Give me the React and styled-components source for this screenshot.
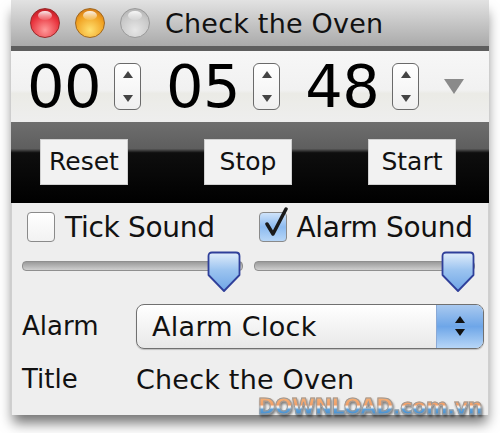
import React from "react";
import styled, { createGlobalStyle } from "styled-components";

const GlobalStyle = createGlobalStyle`
  html, body {
    margin: 0;
    padding: 0;
    background: #fff;
  }
  body {
    font-family: "DejaVu Sans", "Liberation Sans", sans-serif;
  }
`;

const Page = styled.div`
  position: relative;
  width: 500px;
  height: 433px;
  overflow: hidden;
  padding-left: 11px;
  box-sizing: border-box;
`;

const Window = styled.div`
  width: 478px;
  display: flex;
  flex-direction: column;
  box-shadow: 0 10px 12px -2px rgba(0, 0, 0, 0.55);
`;

const TitleBar = styled.div`
  height: 46px;
  display: flex;
  align-items: center;
  gap: 15px;
  padding-left: 19px;
  background: linear-gradient(#e2e2e2, #c6c6c6 50%, #aaaaaa);
  border-bottom: 5px solid #5e5e5e;
`;

const Light = styled.div`
  width: 30px;
  height: 30px;
  border-radius: 50%;
  box-sizing: border-box;
  border: 1px solid ${(p) => p.$edge};
  background: radial-gradient(circle at 50% 75%, ${(p) => p.$glow} 0%, ${(p) => p.$base} 60%, ${(p) => p.$dark} 100%);
  position: relative;
  &::after {
    content: "";
    position: absolute;
    left: 7px;
    top: 2px;
    width: 14px;
    height: 9px;
    border-radius: 50%;
    background: linear-gradient(rgba(255, 255, 255, 0.9), rgba(255, 255, 255, 0.1));
  }
`;

const WindowTitle = styled.div`
  font-size: 27px;
  color: #111;
  letter-spacing: 0.2px;
`;

const TimerRow = styled.div`
  height: 71px;
  display: flex;
  align-items: center;
  padding-left: 16px;
  background: linear-gradient(#f7f7f7, #f1f1f1 55%, #ebebe6 60%, #eeeeee);
`;

const Field = styled.div`
  display: flex;
  align-items: center;
  gap: 13px;
  margin-right: 25px;
`;

const Digits = styled.div`
  font-size: 59px;
  line-height: 1;
  color: #000;
  letter-spacing: -0.5px;
`;

const Stepper = styled.div`
  width: 27px;
  height: 47px;
  box-sizing: border-box;
  border: 1.5px solid #6a6a6a;
  border-radius: 6px;
  background: linear-gradient(#ffffff, #f0f0f0);
  display: flex;
  flex-direction: column;
  align-items: center;
  justify-content: space-between;
  padding: 7px 0;
`;

const Tri = styled.div`
  width: 0;
  height: 0;
  border-left: 5px solid transparent;
  border-right: 5px solid transparent;
  ${(p) =>
    p.$up
      ? "border-bottom: 7px solid #444;"
      : "border-top: 7px solid #444;"}
`;

const Disclosure = styled.div`
  width: 0;
  height: 0;
  border-left: 10px solid transparent;
  border-right: 10px solid transparent;
  border-top: 15px solid #8a8a8a;
  margin-left: 0;
`;

const ButtonBand = styled.div`
  height: 79px;
  display: flex;
  align-items: center;
  justify-content: space-between;
  padding: 0 33px 2px 29px;
  background: linear-gradient(#6e6e6e 0%, #5e5e5e 33%, #0e0e0e 38%, #000 100%);
`;

const BandButton = styled.div`
  width: 88px;
  height: 46px;
  box-sizing: border-box;
  background: #f2f2f2;
  border: 1px solid #d0d0d0;
  display: flex;
  align-items: center;
  justify-content: center;
  font-size: 25px;
  color: #111;
`;

const Content = styled.div`
  background: #eeeeee;
  border-left: 1px solid #cfcfcf;
  border-right: 1px solid #cfcfcf;
  height: 212px;
  display: flex;
  flex-direction: column;
  padding: 7px 0 0 0;
  box-sizing: border-box;
`;

const CheckRow = styled.div`
  display: flex;
  align-items: center;
  height: 34px;
  padding-left: 15px;
`;

const CheckItem = styled.label`
  display: flex;
  align-items: center;
  gap: 10px;
  font-size: 28px;
  color: #111;
  letter-spacing: -0.3px;
  width: ${(p) => p.$w}px;
`;

const Box = styled.div`
  position: relative;
  width: 28px;
  height: 30px;
  box-sizing: border-box;
  border: 1.5px solid #8a8a8a;
  border-radius: 4px;
  background: ${(p) =>
    p.$checked
      ? "linear-gradient(#cfe3fa, #8dbbf0 50%, #b7d6f7)"
      : "linear-gradient(#ffffff, #f2f2f2)"};
  svg {
    position: absolute;
    left: 1px;
    top: -6px;
  }
`;

const SliderRow = styled.div`
  display: flex;
  gap: 11px;
  padding-left: 10px;
  margin-top: 7px;
  height: 42px;
`;

const Slider = styled.div`
  position: relative;
  width: 221px;
  height: 42px;
`;

const Track = styled.div`
  position: absolute;
  left: 0;
  right: 0;
  top: 10px;
  height: 8px;
  border-radius: 4px;
  border: 1px solid #8f8f8f;
  background: linear-gradient(#9a9a9a, #cfcfcf);
`;

const Thumb = styled.svg`
  position: absolute;
  top: 0;
`;

const FormRow = styled.div`
  display: flex;
  align-items: center;
  padding-left: 10px;
  height: ${(p) => p.$h}px;
`;

const Label = styled.div`
  width: 114px;
  font-size: 26px;
  color: #111;
`;

const Value = styled.div`
  font-size: 27px;
  color: #111;
  letter-spacing: 0.2px;
`;

const Popup = styled.div`
  width: 348px;
  height: 45px;
  box-sizing: border-box;
  border: 1.5px solid #707070;
  border-radius: 8px;
  display: flex;
  overflow: hidden;
  background: linear-gradient(#ffffff, #f4f4f4 50%, #e8e8e8);
  box-shadow: 0 1px 1px rgba(0, 0, 0, 0.2);
`;

const PopupText = styled.div`
  flex: 1;
  display: flex;
  align-items: center;
  padding-left: 15px;
  font-size: 27px;
  color: #111;
  letter-spacing: 0.3px;
`;

const PopupArrows = styled.div`
  width: 46px;
  display: flex;
  flex-direction: column;
  align-items: center;
  justify-content: center;
  gap: 6px;
  border-left: 1px solid #8aa9d6;
  background: linear-gradient(#a9c9ef, #6ea6e8 50%, #b7d6f7);
`;

const SmallTri = styled.div`
  width: 0;
  height: 0;
  border-left: 5px solid transparent;
  border-right: 5px solid transparent;
  ${(p) =>
    p.$up ? "border-bottom: 7px solid #111;" : "border-top: 7px solid #111;"}
`;

const Watermark = styled.div`
  position: absolute;
  left: 258px;
  top: 395px;
  font-family: "DejaVu Sans", sans-serif;
  font-weight: bold;
  font-size: 21px;
  letter-spacing: -0.6px;
  white-space: nowrap;
  background: linear-gradient(#f7b77c 0%, #f0a06a 40%, #ffffff 50%, #5fa0d8 60%, #2f7fc4 100%);
  -webkit-background-clip: text;
  background-clip: text;
  color: transparent;
  -webkit-text-stroke: 1px #9a9a9a;
  filter: drop-shadow(1px 2px 1px rgba(0, 0, 0, 0.45));
`;

const ThumbShape = ({ left }) => (
  <Thumb width="34" height="42" viewBox="0 0 34 42" style={{ left }}>
    <defs>
      <linearGradient id="tg" x1="0" y1="0" x2="0" y2="1">
        <stop offset="0" stopColor="#e2eefb" />
        <stop offset="0.45" stopColor="#9cc4f0" />
        <stop offset="1" stopColor="#6fa5e6" />
      </linearGradient>
    </defs>
    <path
      d="M5 1.5 H29 Q32.5 1.5 32.5 5 V24 L17 40 L1.5 24 V5 Q1.5 1.5 5 1.5 Z"
      fill="url(#tg)"
      stroke="#2f3f9a"
      strokeWidth="1.8"
      strokeLinejoin="round"
    />
  </Thumb>
);

const CheckMark = () => (
  <svg width="30" height="34" viewBox="0 0 30 34">
    <path
      d="M6 17 L12 27 L25 2"
      fill="none"
      stroke="#1a1a1a"
      strokeWidth="3.5"
      strokeLinecap="round"
      strokeLinejoin="round"
    />
  </svg>
);

const TimeField = ({ value }) => (
  <Field>
    <Digits>{value}</Digits>
    <Stepper>
      <Tri $up />
      <Tri />
    </Stepper>
  </Field>
);

const App = () => {
  return (
    <>
      <GlobalStyle />
      <Page>
        <Window>
          <TitleBar>
            <Light $base="#e8303a" $glow="#ff9a9a" $dark="#a01018" $edge="#9a2a2a" />
            <Light $base="#f0a020" $glow="#ffe070" $dark="#c06010" $edge="#a06820" />
            <Light $base="#c8c8c8" $glow="#e6e6e6" $dark="#a8a8a8" $edge="#9a9a9a" />
            <WindowTitle>Check the Oven</WindowTitle>
          </TitleBar>
          <TimerRow>
            <TimeField value="00" />
            <TimeField value="05" />
            <TimeField value="48" />
            <Disclosure />
          </TimerRow>
          <ButtonBand>
            <BandButton>Reset</BandButton>
            <BandButton>Stop</BandButton>
            <BandButton>Start</BandButton>
          </ButtonBand>
          <Content>
            <CheckRow>
              <CheckItem $w={232}>
                <Box />
                Tick Sound
              </CheckItem>
              <CheckItem $w={230}>
                <Box $checked>
                  <CheckMark />
                </Box>
                Alarm Sound
              </CheckItem>
            </CheckRow>
            <SliderRow>
              <Slider>
                <Track />
                <ThumbShape left={185} />
              </Slider>
              <Slider>
                <Track />
                <ThumbShape left={187} />
              </Slider>
            </SliderRow>
            <FormRow $h={66}>
              <Label>Alarm</Label>
              <Popup>
                <PopupText>Alarm Clock</PopupText>
                <PopupArrows>
                  <SmallTri $up />
                  <SmallTri />
                </PopupArrows>
              </Popup>
            </FormRow>
            <FormRow $h={40}>
              <Label>Title</Label>
              <Value>Check the Oven</Value>
            </FormRow>
          </Content>
        </Window>
        <Watermark>DOWNLOAD.com.vn</Watermark>
      </Page>
    </>
  );
};

export default App;
